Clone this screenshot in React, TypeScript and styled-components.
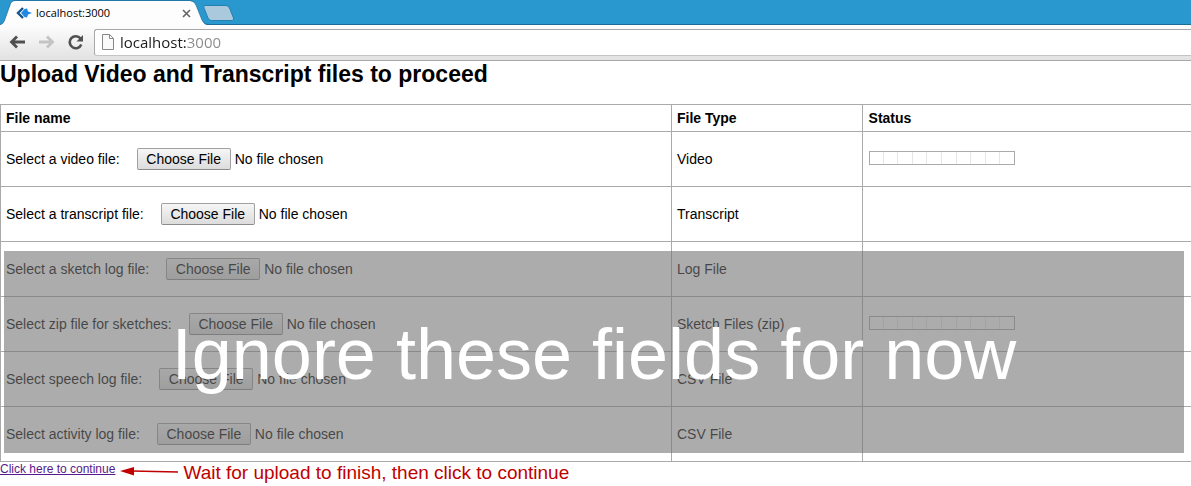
import React from "react";
import styled, { createGlobalStyle } from "styled-components";

const GlobalStyle = createGlobalStyle`
  * { box-sizing: border-box; }
  body {
    margin: 0;
    background: #fff;
    color: #000;
    font-family: "Liberation Sans", Arial, sans-serif;
    font-size: 14px;
    overflow-x: hidden;
  }
`;

const TabStrip = styled.header`
  display: flex;
  height: 25px;
  background: #2998ce;
  border-bottom: 1px solid #1b6b94;
`;

const Tab = styled.div`
  position: relative;
  display: flex;
  align-items: center;
  width: 208px;
  height: 25px;
  padding: 1px 17px 0 16px;
  font: 11px/16px "Open Sans", "Noto Sans", sans-serif;
`;

const TabShape = styled.svg`
  position: absolute;
  inset: 0;
  width: 208px;
  height: 25px;
`;

const Favicon = styled.svg`
  position: relative;
  width: 16px;
  height: 12px;
  margin-right: 4px;
`;

const TabTitle = styled.span`
  position: relative;
  flex: 1;
`;

const IconButton = styled.button`
  position: relative;
  display: flex;
  align-items: center;
  justify-content: center;
  padding: 0;
  border: 0;
  background: none;
`;

const NewTabButton = styled(IconButton)`
  margin-left: -6px;
`;

const Toolbar = styled.nav`
  display: flex;
  align-items: center;
  gap: 12px;
  height: 36px;
  padding: 0 0 1px 9px;
  background: linear-gradient(#fdfdfd, #e2e2e2);
  border-bottom: 1px solid #a8a8a8;
`;

const AddressBar = styled.label`
  display: flex;
  flex: 1;
  align-items: center;
  gap: 6px;
  height: 27px;
  margin-left: -3px;
  padding-left: 7px;
  background: #fff;
  border: 1px solid #a8a8a8;
  border-bottom-color: #c4c4c4;
  border-right: 0;
  border-radius: 3px 0 0 3px;
`;

const AddressInput = styled.input`
  flex: 1;
  min-width: 0;
  padding: 0;
  border: 0;
  outline: 0;
  font: 15px/22px "Open Sans", "Noto Sans", sans-serif;
  color: transparent;
  background: linear-gradient(to right, #1c1c1c 67px, #8a8a8a 67px);
  background-clip: text;
  -webkit-background-clip: text;
`;

const Title = styled.h1`
  margin: 0 0 16px;
  font-size: 23px;
  line-height: 27px;
`;

const TableArea = styled.section`
  position: relative;
`;

const FileTable = styled.table`
  width: 100%;
  table-layout: fixed;
  border-spacing: 0;
  border-top: 1px solid #aaa;

  th:last-child,
  td:last-child {
    padding-left: 6px;
  }
`;

const HeadCell = styled.th<{ $width?: string }>`
  width: ${(p) => p.$width ?? "auto"};
  height: 27px;
  padding: 0 5px;
  text-align: left;
  line-height: 18px;
  border: solid #aaa;
  border-width: 0 0 1px 1px;
`;

const Cell = styled.td`
  height: 55px;
  padding: 0 5px;
  border: solid #aaa;
  border-width: 0 0 1px 1px;
`;

const FileField = styled.div`
  display: flex;
  align-items: center;
  gap: 17px;
`;

const FileInput = styled.input`
  flex: 1;
  min-width: 0;
  font: inherit;

  &::file-selector-button {
    width: 94px;
    height: 22px;
    margin: 0 4px 0 0;
    padding: 0 8px;
    font: inherit;
    color: #000;
    white-space: nowrap;
    background: linear-gradient(#f6f6f6, #dcdcdc);
    border: 1px solid #a0a0a0;
    border-bottom-color: #8c8c8c;
    border-radius: 2px;
  }
`;

const UploadProgress = styled.progress`
  display: block;
  width: 146px;
  height: 14px;
  margin-bottom: 2px;
  appearance: none;
  border: 1px solid #aaa;
  background: repeating-linear-gradient(
      to right,
      #fff 0 calc(10% - 1px),
      #e6e6e6 calc(10% - 1px) 10%
    )
    border-box;

  &::-webkit-progress-bar {
    background: transparent;
  }
`;

const IgnoreNotice = styled.div`
  position: absolute;
  inset: 147px 7px 9px 4px;
  display: flex;
  align-items: center;
  justify-content: center;
  padding-top: 4px;
  background: rgba(117, 117, 117, 0.6);
  color: #fff;
  font-size: 72px;
  line-height: 84px;
  white-space: nowrap;
`;

const Footer = styled.footer`
  display: flex;
  align-items: flex-start;
  gap: 5px;
`;

const ContinueLink = styled.a`
  font-size: 12px;
  line-height: 14px;
  color: #551a8b;
  text-decoration: underline;
`;

const Arrow = styled.svg`
  width: 58px;
  height: 12px;
  margin-top: 4px;
`;

const Hint = styled.p`
  margin: 0;
  color: #c00000;
  font-size: 19px;
  line-height: 22px;
`;

type UploadRow = { id: string; label: string; type: string; progress?: boolean };

const rows: UploadRow[] = [
  { id: "video", label: "Select a video file:", type: "Video", progress: true },
  { id: "transcript", label: "Select a transcript file:", type: "Transcript" },
  { id: "sketch-log", label: "Select a sketch log file:", type: "Log File" },
  { id: "sketches", label: "Select zip file for sketches:", type: "Sketch Files (zip)", progress: true },
  { id: "speech-log", label: "Select speech log file:", type: "CSV File" },
  { id: "activity-log", label: "Select activity log file:", type: "CSV File" },
];

function BrowserChrome() {
  return (
    <>
      <TabStrip>
        <Tab>
          <TabShape viewBox="0 0 208 25">
            <path d="M0 25C3 24 4 22 5 19L10 5Q11 1 15 1H190Q194 1 196 5L202 20Q204 25 208 25Z" fill="#fdfdfd" />
            <path d="M0 24.500C3 24 4 22 5 19L10 5Q11 .5 15 .5H190Q194 .5 196 5L202 20Q204 24.500 208 24.500" fill="none" stroke="#1b6b94" strokeOpacity=".7" />
          </TabShape>
          <Favicon viewBox="0 0 16 12">
            <path d="M7 1L2 6L7 11" fill="none" stroke="#14548c" strokeWidth="2.400" />
            <path d="M8.500 2L11 1.500L12 4.500L16 6L12 7.500L11 10.500L8.500 10L5 6Z" fill="#1e88e5" />
          </Favicon>
          <TabTitle>localhost:3000</TabTitle>
          <IconButton aria-label="Close tab">
            <svg width="9" height="9" viewBox="0 0 9 9">
              <path d="M1 1L8 8M8 1L1 8" stroke="#666" strokeWidth="1.600" />
            </svg>
          </IconButton>
        </Tab>
        <NewTabButton aria-label="New tab">
          <svg width="34" height="25" viewBox="0 0 34 25">
            <path d="M3 5.500H24Q26.500 5.500 27.500 8L31.500 18Q32.500 20.500 30 20.500H9.500Q7 20.500 6 18L2 8Q1 5.500 3 5.500Z" fill="#abc9dd" stroke="#2480ad" />
          </svg>
        </NewTabButton>
      </TabStrip>
      <Toolbar>
        <IconButton aria-label="Back">
          <svg width="17" height="16" viewBox="0 0 17 16">
            <path d="M16 8H3M8 2.500L2.500 8L8 13.500" fill="none" stroke="#505050" strokeWidth="2.800" />
          </svg>
        </IconButton>
        <IconButton aria-label="Forward">
          <svg width="17" height="16" viewBox="0 0 17 16">
            <path d="M1 8H14M9 2.500L14.500 8L9 13.500" fill="none" stroke="#c4c4c4" strokeWidth="2.800" />
          </svg>
        </IconButton>
        <IconButton aria-label="Reload">
          <svg width="18" height="16" viewBox="0 0 18 16">
            <path d="M13.500 4.500A6 6 0 1 0 14.300 10.500" fill="none" stroke="#505050" strokeWidth="2.600" />
            <path d="M16 1V7.500H9.500Z" fill="#505050" />
          </svg>
        </IconButton>
        <AddressBar>
          <svg width="12" height="16" viewBox="0 0 12 16">
            <path d="M.5.5H7.500L11.500 4.500V15.500H.5ZM7.500.5V4.500H11.500" fill="#fafafa" stroke="#888" />
          </svg>
          <AddressInput aria-label="Address" defaultValue="localhost:3000" spellCheck={false} />
        </AddressBar>
      </Toolbar>
    </>
  );
}

export default function App() {
  return (
    <>
      <GlobalStyle />
      <BrowserChrome />
      <main>
        <Title>Upload Video and Transcript files to proceed</Title>
        <TableArea>
          <FileTable>
            <thead>
              <tr>
                <HeadCell $width="56.340%">File name</HeadCell>
                <HeadCell $width="16%">File Type</HeadCell>
                <HeadCell>Status</HeadCell>
              </tr>
            </thead>
            <tbody>
              {rows.map((row) => (
                <tr key={row.id}>
                  <Cell>
                    <FileField>
                      <label htmlFor={row.id}>{row.label}</label>
                      <FileInput type="file" id={row.id} />
                    </FileField>
                  </Cell>
                  <Cell>{row.type}</Cell>
                  <Cell>
                    {row.progress && <UploadProgress value={0} max={100} aria-label={`${row.type} upload`} />}
                  </Cell>
                </tr>
              ))}
            </tbody>
          </FileTable>
          <IgnoreNotice>Ignore these fields for now</IgnoreNotice>
        </TableArea>
        <Footer>
          <ContinueLink href="#continue">Click here to continue</ContinueLink>
          <Arrow viewBox="0 0 58 12">
            <path d="M12 5L58 6" stroke="#c00000" strokeWidth="1.300" />
            <path d="M0 5L14 1V9.500Z" fill="#c00000" />
          </Arrow>
          <Hint>Wait for upload to finish, then click to continue</Hint>
        </Footer>
      </main>
    </>
  );
}
